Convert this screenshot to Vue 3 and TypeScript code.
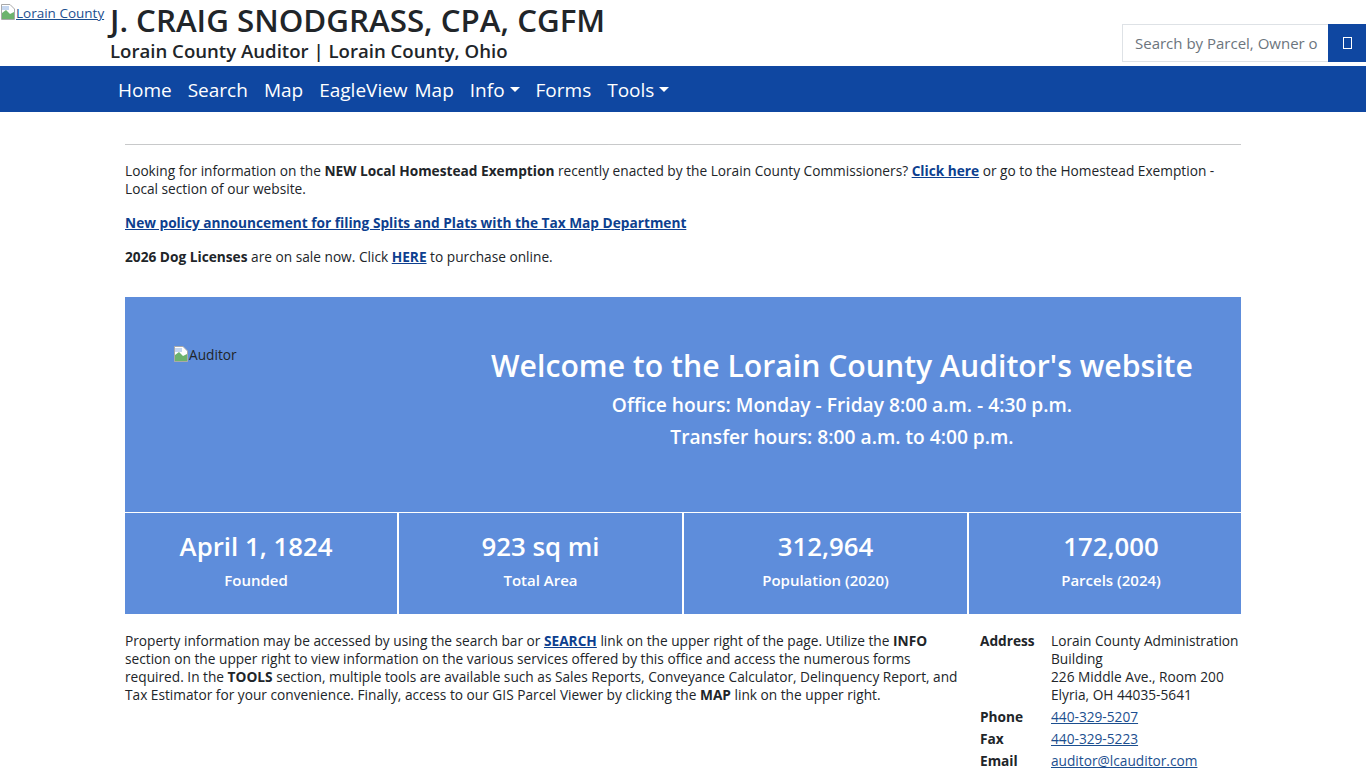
<script setup lang="ts">
type Stat = { value: string; label: string }

const navLinks = [
    { label: 'Home' },
    { label: 'Search' },
    { label: 'Map' },
    { label: 'EagleView Map' },
    { label: 'Info', dropdown: true },
    { label: 'Forms' },
    { label: 'Tools', dropdown: true }
]

const stats: Stat[] = [
    { value: 'April 1, 1824', label: 'Founded' },
    { value: '923 sq mi', label: 'Total Area' },
    { value: '312,964', label: 'Population (2020)' },
    { value: '172,000', label: 'Parcels (2024)' }
]
</script>

<template>
    <div class="page">
        <header class="header">
            <a class="logo" href="#">
                <svg class="broken" viewBox="0 0 16 16" width="16" height="16">
                    <path d="M1.5 .5H10L14.5 5V15.5H1.5Z" fill="#fff" stroke="#a9a9a9" />
                    <path d="M2 9L6 6L10 10L14 8V15H2Z" fill="#6db36d" />
                    <path d="M2 2H9V6H2Z" fill="#c5d7f0" />
                </svg>Lorain County
            </a>
            <div class="titles">
                <h1 class="title">J. CRAIG SNODGRASS, CPA, CGFM</h1>
                <div class="subtitle">Lorain County Auditor | Lorain County, Ohio</div>
            </div>
            <form class="search" @submit.prevent>
                <input class="search__input" type="text" placeholder="Search by Parcel, Owner or Address" />
                <button class="search__button" type="submit" aria-label="Search"><span class="search__glyph"></span></button>
            </form>
        </header>

        <nav class="nav">
            <a v-for="link in navLinks" :key="link.label" class="nav__link" href="#">
                {{ link.label }}<span v-if="link.dropdown" class="nav__caret"></span>
            </a>
        </nav>

        <main class="main">
            <hr class="rule" />
            <p class="note">
                Looking for information on the <b>NEW Local Homestead Exemption</b> recently enacted by the Lorain County Commissioners?
                <a href="#"><b>Click here</b></a> or go to the Homestead Exemption - Local section of our website.
            </p>
            <p class="note"><a href="#"><b>New policy announcement for filing Splits and Plats with the Tax Map Department</b></a></p>
            <p class="note"><b>2026 Dog Licenses</b> are on sale now. Click <a href="#"><b>HERE</b></a> to purchase online.</p>

            <section class="hero">
                <div class="hero__image">
                    <svg class="broken" viewBox="0 0 16 16" width="16" height="16">
                        <path d="M1.5 .5H10L14.5 5V15.5H1.5Z" fill="#fff" stroke="#a9a9a9" />
                        <path d="M2 9L6 6L10 10L14 8V15H2Z" fill="#6db36d" />
                        <path d="M2 2H9V6H2Z" fill="#c5d7f0" />
                    </svg>Auditor
                </div>
                <div class="hero__text">
                    <h2 class="hero__title">Welcome to the Lorain County Auditor's website</h2>
                    <div class="hero__line">Office hours: Monday - Friday 8:00 a.m. - 4:30 p.m.</div>
                    <div class="hero__line">Transfer hours: 8:00 a.m. to 4:00 p.m.</div>
                </div>
            </section>

            <section class="stats">
                <div v-for="stat in stats" :key="stat.label" class="stat">
                    <div class="stat__value">{{ stat.value }}</div>
                    <div class="stat__label">{{ stat.label }}</div>
                </div>
            </section>

            <section class="info">
                <p class="info__text">
                    Property information may be accessed by using the search bar or <a href="#"><b>SEARCH</b></a> link on the upper right of the page. Utilize the <b>INFO</b>
                    section on the upper right to view information on the various services offered by this office and access the numerous forms
                    required. In the <b>TOOLS</b> section, multiple tools are available such as Sales Reports, Conveyance Calculator, Delinquency Report, and
                    Tax Estimator for your convenience. Finally, access to our GIS Parcel Viewer by clicking the <b>MAP</b> link on the upper right.
                </p>
                <dl class="contact">
                    <dt>Address</dt>
                    <dd>Lorain County Administration Building<br />226 Middle Ave., Room 200<br />Elyria, OH 44035-5641</dd>
                    <dt>Phone</dt>
                    <dd><a href="#">440-329-5207</a></dd>
                    <dt>Fax</dt>
                    <dd><a href="#">440-329-5223</a></dd>
                    <dt>Email</dt>
                    <dd><a href="#">auditor@lcauditor.com</a></dd>
                </dl>
            </section>
        </main>
    </div>
</template>

<style>
    html, body {
        overflow: hidden;
        height: 768px;
    }
</style>

<style scoped>
    .page {
        height: 768px;
        overflow: hidden;
        font-family: "Open Sans", "Noto Sans", sans-serif;
        font-size: 13.7px;
        line-height: 18px;
        color: #212529;
        background-color: #fff;
    }

    a {
        color: #0d3f8f;
    }

    .broken {
        flex: none;
        vertical-align: top;
    }

    .header {
        height: 66px;
        display: flex;
        align-items: flex-start;
    }

    .logo {
        width: 110px;
        flex: none;
        font-size: 13.5px;
        line-height: 18px;
        padding-top: 4px;
        white-space: nowrap;
        color: #1c4f8f;
    }

    .titles {
        flex: 1;
    }

    .title {
        margin: 0;
        font-size: 31.3px;
        line-height: 40px;
        font-weight: 600;
    }

    .subtitle {
        font-size: 18.6px;
        line-height: 24px;
        font-weight: 600;
        margin-top: -1px;
    }

    .search {
        display: flex;
        width: 244px;
        height: 38px;
        margin-top: 24px;
    }

    .search__input {
        flex: 1;
        min-width: 0;
        border: 1px solid #dee2e6;
        border-right: 0;
        padding: 0 10px 0 12px;
        font-family: inherit;
        font-size: 15px;
        color: #212529;
        outline: 0;
    }

    .search__input::placeholder {
        color: #6c757d;
    }

    .search__button {
        width: 38px;
        border: 0;
        padding: 0;
        background-color: #0f47a1;
        display: flex;
        align-items: center;
        justify-content: center;
    }

    .search__glyph {
        width: 7px;
        height: 10px;
        border: 1px solid #fff;
    }

    .nav {
        height: 46px;
        display: flex;
        align-items: center;
        gap: 16px;
        padding: 1px 0 0 118px;
        box-sizing: border-box;
        background-color: #0f47a1;
    }

    .nav__link {
        font-size: 19px;
        word-spacing: 2px;
        color: #fff;
        text-decoration: none;
        display: flex;
        align-items: center;
        white-space: nowrap;
    }

    .nav__caret {
        width: 0;
        height: 0;
        margin-left: 5px;
        border-top: 5.5px solid #fff;
        border-left: 5.5px solid transparent;
        border-right: 5.5px solid transparent;
    }

    .main {
        width: 1116px;
        margin: 0 auto;
        padding-top: 32px;
    }

    .rule {
        margin: 0 0 17px;
        border: 0;
        border-top: 1px solid #c8c9ca;
    }

    .note {
        margin: 0 0 16px;
    }

    .hero {
        margin-top: 31px;
        height: 215px;
        display: flex;
        background-color: #5e8ddb;
        color: #fff;
        padding: 49px 48px 0;
        box-sizing: border-box;
    }

    .hero__image {
        width: 318px;
        flex: none;
        color: #212529;
        font-size: 13.7px;
        line-height: 18px;
    }

    .hero__text {
        flex: 1;
        text-align: center;
    }

    .hero__title {
        margin: 0 0 3px;
        font-size: 30.2px;
        line-height: 40px;
        font-weight: 600;
    }

    .hero__line {
        font-size: 19.2px;
        line-height: 32px;
        font-weight: 600;
    }

    .stats {
        display: grid;
        grid-template-columns: 274px 285px 285px 272px;
        height: 102px;
        background-color: #5e8ddb;
        color: #fff;
        border-top: 1px solid #fff;
        box-sizing: border-box;
    }

    .stat {
        text-align: center;
        padding-top: 15px;
        border-right: 2px solid #fff;
    }

    .stat:first-child {
        padding-right: 10px;
    }

    .stat:last-child {
        padding-left: 12px;
        border-right: 0;
    }

    .stat__value {
        font-size: 25.8px;
        line-height: 36px;
        font-weight: 600;
    }

    .stat__label {
        font-size: 15px;
        line-height: 24px;
        font-weight: 600;
        margin-top: 4px;
    }

    .info {
        display: flex;
        justify-content: space-between;
        padding-top: 18px;
    }

    .info__text {
        width: 836px;
        margin: 0;
    }

    .contact {
        width: 261px;
        margin: 0;
        display: grid;
        grid-template-columns: 71px 1fr;
        row-gap: 4px;
    }

    .contact dt {
        font-weight: 700;
    }

    .contact dd {
        margin: 0;
    }

    .contact a {
        color: #1c4f8f;
    }
</style>
